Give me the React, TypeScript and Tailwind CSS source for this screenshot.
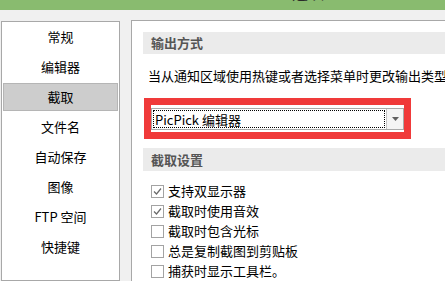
const font = { fontFamily: '"Noto Sans CJK SC", "Noto Sans", sans-serif' };

const navItems = ["常规", "编辑器", "截取", "文件名", "自动保存", "图像", "FTP 空间", "快捷键"];

const options = [
  { label: "支持双显示器", checked: true },
  { label: "截取时使用音效", checked: true },
  { label: "截取时包含光标", checked: false },
  { label: "总是复制截图到剪贴板", checked: false },
  { label: "捕获时显示工具栏。", checked: false },
];

function SectionHeader({ title }: { title: string }) {
  return (
    <div className="flex h-[23px] items-center bg-[#ebebeb] pl-[8px] text-[13px] font-bold text-[#555]">
      {title}
    </div>
  );
}

function CheckBox({ checked }: { checked: boolean }) {
  return (
    <span className="flex h-[13px] w-[13px] shrink-0 items-center justify-center border border-[#a3a3a3] bg-white">
      {checked && (
        <svg width="9" height="9" viewBox="0 0 9 9">
          <polyline points="1,4.5 3.5,7 8,1.5" fill="none" stroke="#6a6a6a" strokeWidth="1.2" />
        </svg>
      )}
    </span>
  );
}

export default function App() {
  return (
    <div className="flex h-[281px] w-[445px] flex-col overflow-hidden bg-[#f0f0f0] text-black" style={font}>
      <div className="h-[10px] shrink-0 overflow-hidden bg-[#89bb6f]">
        <div className="ml-[292px] mt-[-17px] text-[16px] leading-[18px] text-[#2a2a2a]">选项</div>
      </div>

      <div className="flex min-h-0 flex-1 pt-[10px]">
        <aside className="ml-[1px] mt-[1px] flex w-[119px] shrink-0 flex-col gap-[2px] border border-[#a8a8a8] bg-white px-[1px] pt-[1px]">
          {navItems.map((item) => (
            <div
              key={item}
              className={`flex h-[28px] items-center justify-center text-[13px] ${
                item === "截取" ? "border border-[#b5b5b5] bg-[#cdcdcd]" : ""
              }`}
            >
              {item}
            </div>
          ))}
        </aside>

        <section className="ml-[11px] flex min-w-0 flex-1 flex-col border-l border-t border-[#a8a8a8] bg-white pl-[11px] pt-[11px]">
          <SectionHeader title="输出方式" />
          <div className="mt-[13px] h-[18px] whitespace-nowrap pl-[5px] text-[13px] leading-[18px]">
            当从通知区域使用热键或者选择菜单时更改输出类型
          </div>

          <div className="ml-[1px] mt-[13px] w-[267px] border-[7px] border-[#f03a3a] pb-[2px] pt-[3px]">
            <div className="flex h-[22px] border border-[#a9a9a9] bg-white">
              <div className="m-[1px] flex flex-1 items-center border border-dotted border-black pl-[1px] text-[13px] leading-none">
                PicPick 编辑器
              </div>
              <div className="flex w-[17px] items-center justify-center border-l border-[#c4c4c4] bg-[#f4f4f4]">
                <svg width="7" height="4" viewBox="0 0 7 4">
                  <polygon points="0,0 7,0 3.5,4" fill="#606060" />
                </svg>
              </div>
            </div>
          </div>

          <div className="mt-[9px]">
            <SectionHeader title="截取设置" />
          </div>

          <div className="mt-[10px] flex flex-col pl-[8px]">
            {options.map((opt) => (
              <div key={opt.label} className="flex h-[20px] items-center gap-[4px] whitespace-nowrap text-[13px]">
                <CheckBox checked={opt.checked} />
                <span>{opt.label}</span>
              </div>
            ))}
          </div>
        </section>
      </div>
    </div>
  );
}
